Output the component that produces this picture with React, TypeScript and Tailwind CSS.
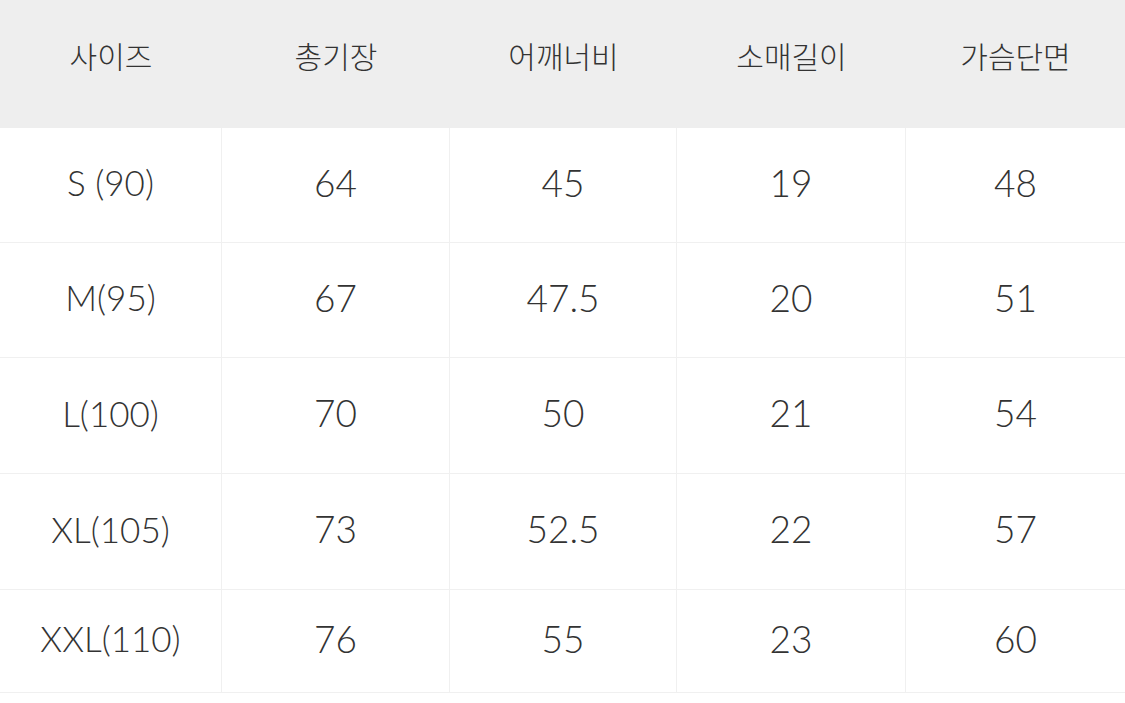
const headers = ['사이즈', '총기장', '어깨너비', '소매길이', '가슴단면']

const rows = [
  { size: 'S (90)', values: ['64', '45', '19', '48'], h: 'h-[115px]' },
  { size: 'M(95)', values: ['67', '47.5', '20', '51'], h: 'h-[115px]' },
  { size: 'L(100)', values: ['70', '50', '21', '54'], h: 'h-[116px]' },
  { size: 'XL(105)', values: ['73', '52.5', '22', '57'], h: 'h-[116px]' },
  { size: 'XXL(110)', values: ['76', '55', '23', '60'], h: 'h-[103px]' },
]

const cols = 'grid grid-cols-[222px_228px_227px_229px_1fr]'

export default function App() {
  return (
    <div className="w-[1125px] h-[703px] bg-white text-[#333333] font-['Noto_Sans_CJK_KR','Noto_Sans',sans-serif] overflow-hidden">
      <div className={`${cols} h-[128px] bg-[#eeeeee]`}>
        {headers.map((h) => (
          <div key={h} className="flex items-center justify-center text-[30px] font-light pb-[18px]">
            {h}
          </div>
        ))}
      </div>
      {rows.map((r) => (
        <div key={r.size} className={`${cols} ${r.h} border-b border-[#f0f0f0] font-['Lato_Light','Lato',sans-serif] text-[#333333]`}>
          <div className="flex items-center justify-center text-[35px] font-normal pb-[5px] border-r border-[#f0f0f0]">
            {r.size}
          </div>
          {r.values.map((v, i) => (
            <div
              key={i}
              className={`flex items-center justify-center text-[37px] font-normal pb-[5px] ${i < 3 ? 'border-r border-[#f0f0f0]' : ''}`}
            >
              {v}
            </div>
          ))}
        </div>
      ))}
    </div>
  )
}
